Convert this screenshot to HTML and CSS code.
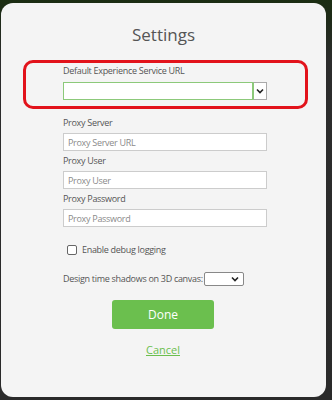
FILE: index.html
```html
<!DOCTYPE html>
<html>
<head>
<meta charset="utf-8">
<link rel="stylesheet" href="styles.css">
</head>
<body>
<div class="dialog">
  <h1 class="title">Settings</h1>
  <div class="highlight">
    <div class="field">
      <label class="label">Default Experience Service URL</label>
      <div class="combo">
        <input class="combo-input" type="text">
        <span class="combo-btn">
          <svg width="8" height="6" viewBox="0 0 8 6"><path d="M1 1.5 L4 4.5 L7 1.5" fill="none" stroke="#222" stroke-width="1.6"/></svg>
        </span>
      </div>
    </div>
  </div>
  <div class="fields">
    <label class="label">Proxy Server</label>
    <input class="text" type="text" placeholder="Proxy Server URL">
    <label class="label">Proxy User</label>
    <input class="text" type="text" placeholder="Proxy User">
    <label class="label">Proxy Password</label>
    <input class="text" type="text" placeholder="Proxy Password">
  </div>
  <div class="check-row">
    <span class="checkbox"></span>
    <span class="check-label">Enable debug logging</span>
  </div>
  <div class="shadow-row">
    <span class="label inline">Design time shadows on 3D canvas:</span>
    <span class="mini-select">
      <svg width="8" height="6" viewBox="0 0 8 6"><path d="M1 1.5 L4 4.5 L7 1.5" fill="none" stroke="#222" stroke-width="1.6"/></svg>
    </span>
  </div>
  <div class="actions">
    <button class="done">Done</button>
    <a class="cancel" href="#">Cancel</a>
  </div>
</div>
</body>
</html>
```
FILE: styles.css
```css
* { box-sizing: border-box; }
html, body { margin: 0; padding: 0; }
body {
  width: 332px;
  height: 400px;
  background: linear-gradient(180deg, #1b2d12 0px, #1e2a18 20px, #2c2c2c 60px, #2a2a2a 100%);
  font-family: "Open Sans", "Noto Sans", sans-serif;
  overflow: hidden;
  padding: 3px 6px 3px 1px;
}
.dialog {
  background: #f4f4f4;
  border-radius: 12px;
  height: 394px;
  display: flex;
  flex-direction: column;
  align-items: stretch;
}
.title {
  margin: 21px 0 0 0;
  text-align: center;
  font-size: 17px;
  font-weight: 400;
  color: #555;
  line-height: 22px;
}
.highlight {
  margin: 14px 18px 0 22px;
  border: 3px solid #e2131b;
  border-radius: 10px;
  height: 49px;
  padding: 0 0 0 37px;
}
.field { display: flex; flex-direction: column; }
.label {
  font-size: 9px;
  letter-spacing: -0.3px;
  color: #555;
  line-height: 12px;
}
.highlight .label { margin-top: 2px; }
.combo {
  display: flex;
  margin-top: 5px;
  width: 204px;
  height: 18px;
}
.combo-input {
  flex: 1;
  height: 18px;
  border: 1px solid #8cc97a;
  background: #fff;
  margin: 0;
  padding: 0;
  outline: none;
}
.combo-btn {
  width: 14px;
  height: 18px;
  border: 1px solid #aaa;
  border-left: 1px solid #8cc97a;
  background: #fff;
  display: flex;
  align-items: center;
  justify-content: center;
}
.fields {
  display: flex;
  flex-direction: column;
  padding-left: 62px;
  margin-top: 8px;
}
.fields .label { margin-bottom: 4px; }
.text {
  width: 204px;
  height: 18px;
  border: 1px solid #ccc;
  background: #fff;
  margin: 0 0 4px 0;
  padding: 0 4px;
  font-family: "Open Sans", "Noto Sans", sans-serif;
  font-size: 9px;
  letter-spacing: -0.3px;
  color: #333;
  outline: none;
}
.text::placeholder { color: #8a8a8a; }
.check-row {
  display: flex;
  align-items: center;
  padding-left: 66px;
  margin-top: 13px;
  gap: 5px;
}
.checkbox {
  width: 10px;
  height: 10px;
  border: 1px solid #666;
  border-radius: 2px;
  background: #fff;
}
.check-label {
  font-size: 9px;
  letter-spacing: -0.3px;
  color: #555;
  line-height: 12px;
}
.shadow-row {
  display: flex;
  align-items: center;
  padding-left: 62px;
  margin-top: 16px;
}
.mini-select {
  width: 40px;
  height: 14px;
  border: 1px solid #888;
  border-radius: 2px;
  background: #fff;
  display: flex;
  align-items: center;
  justify-content: flex-end;
  padding-right: 4px;
  margin-left: 1px;
}
.actions {
  display: flex;
  flex-direction: column;
  align-items: center;
  margin-top: 14px;
  padding-right: 1px;
}
.done {
  width: 102px;
  height: 29px;
  border: none;
  border-radius: 3px;
  background: #6bbf4e;
  color: #fff;
  font-family: "Open Sans", "Noto Sans", sans-serif;
  font-size: 12px;
  cursor: pointer;
}
.cancel {
  margin-top: 13px;
  font-size: 11px;
  color: #6bbf4e;
  text-decoration: underline;
}
```
